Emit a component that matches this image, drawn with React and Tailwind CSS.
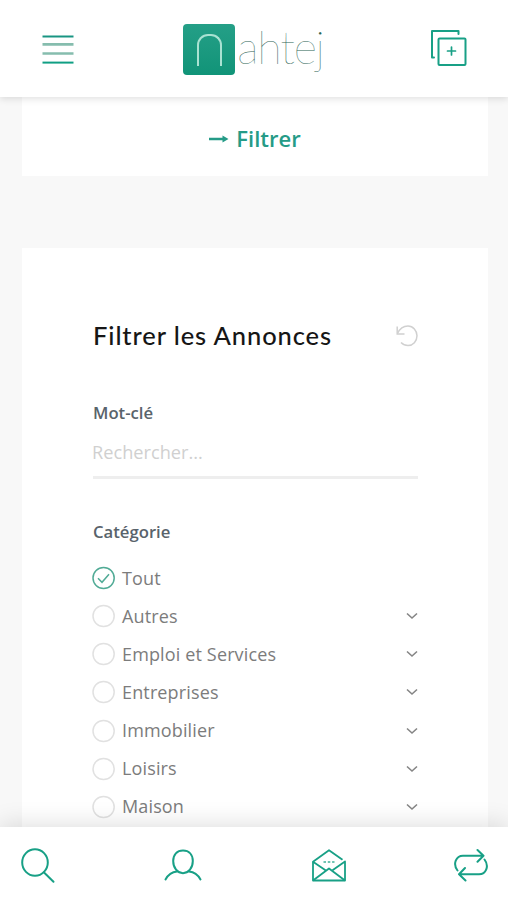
import React from "react";

const categories = [
  "Autres",
  "Emploi et Services",
  "Entreprises",
  "Immobilier",
  "Loisirs",
  "Maison",
];

const Logo = () => (
  <div className="flex items-start h-[54px]">
    <div className="mt-[2px] w-[52px] h-[51px] rounded-[4px] bg-linear-to-b from-[#249f87] to-[#109478] flex items-end justify-center pb-[9px]">
      <div className="w-[25px] h-[32px] border-2 border-b-0 border-[#a9e2d2] rounded-t-[11px]" />
    </div>
    <span className="ml-[2px] mt-[-2px] font-['Lato'] font-thin text-[45px] leading-[54px] tracking-[-1.3px] text-[#2c6455]">
      ahtej
    </span>
  </div>
);

const Header = () => (
  <header className="relative z-10 h-[97px] shrink-0 bg-white shadow-[0_2px_7px_rgba(0,0,0,0.12)] flex items-start justify-between pl-[42px] pr-[41px]">
    <button className="mt-[35px] w-8">
      <svg width="32" height="29" viewBox="0 0 32 29" fill="none" strokeWidth="2">
        <path d="M0.5 1.5h31" stroke="#199582" />
        <path d="M0.5 9.4h31M0.5 18.5h31" stroke="#86bdae" strokeWidth="2.6" />
        <path d="M0.5 27.6h31" stroke="#109f84" />
      </svg>
    </button>
    <div className="mt-[22px] ml-[3px]">
      <Logo />
    </div>
    <button className="mt-[29px]">
      <svg width="37" height="38" viewBox="0 0 37 38" fill="none" stroke="#18a086" strokeWidth="2" strokeLinecap="round" strokeLinejoin="round">
        <path d="M4 28.500H2V2H28.500v3" />
        <rect x="8.500" y="9.500" width="27" height="26.500" rx="1" />
        <path d="M21.500 18v8M17.500 22h8" strokeWidth="1.700" />
      </svg>
    </button>
  </header>
);

const CategoryRow = ({ label, checked }) => (
  <li className="h-[38.15px] flex items-center">
    <svg width="24" height="24" viewBox="0 0 24 24" fill="none" className="-ml-px shrink-0">
      <circle cx="11.6" cy="12" r="10.6" stroke={checked ? "#51ab96" : "#e1e1e1"} strokeWidth="1.5" />
      {checked && <path d="M6 12.3l4 4 7-8" stroke="#51ab96" strokeWidth="1.5" />}
    </svg>
    <span className="ml-[6px] flex-1 text-[18px] tracking-[0.14px] text-[#7c7c7c]">{label}</span>
    {!checked && (
      <svg width="12" height="8" viewBox="0 0 12 8" fill="none" stroke="#858585" strokeWidth="1.6">
        <path d="M1 1.5l5 4.5 5-4.5" />
      </svg>
    )}
  </li>
);

const BottomNav = () => (
  <nav className="relative z-10 h-[73px] shrink-0 bg-white shadow-[0_-3px_24px_rgba(0,0,0,0.13)] flex items-start justify-between pl-[21px] pr-[19px] pt-5">
    {/* Search */}
    <svg width="35" height="37" viewBox="0 0 35 37" fill="none" stroke="#18a086" strokeWidth="2" strokeLinecap="round">
      <ellipse cx="14" cy="15.5" rx="12.8" ry="13.3" />
      <path d="M22.8 25.2l9.7 9.5" />
    </svg>
    {/* Account */}
    <svg width="38" height="37" viewBox="0 0 38 37" className="ml-[2px]" fill="none" stroke="#18a086" strokeWidth="2" strokeLinecap="round">
      <path d="M19 3.500c-6 0-9.800 4-9.800 10.500 0 7 4.300 12.200 9.800 12.200s9.800-5.200 9.800-12.200c0-6.500-3.800-10.500-9.800-10.500z" />
      <path d="M1.500 32.500c2.500-4.500 6-7.300 11.500-7.900M36.500 32.500c-2.500-4.500-6-7.300-11.500-7.900" />
    </svg>
    {/* Messages */}
    <svg width="36" height="37" viewBox="0 0 36 37" className="ml-[4px]" fill="none" stroke="#18a086" strokeWidth="1.8" strokeLinejoin="round">
      <path d="M31.500 12.700L18 3.200 2 14.700V33.500h32V14.500L21.500 23.200" />
      <path d="M2 14.700l12.500 8.500M2 33.500l16-12 16 12" />
      <path d="M12.500 15h11" strokeWidth="2" strokeDasharray="2.500 1.800" stroke="#6fc3b2" />
    </svg>
    {/* Compare */}
    <svg width="36" height="37" viewBox="0 0 36 37" fill="none" stroke="#18a086" strokeWidth="2" strokeLinecap="round" strokeLinejoin="round">
      <path d="M4.500 23.500C-0.500 17 3 8.700 10 8.700h20M24.500 3l6 5.700-6 6" />
      <path d="M31.500 12.500C36.500 19 33 27.300 26 27.300H6M12 21l-6 6.300 6.500 6.200" />
    </svg>
  </nav>
);

const App = () => {
  return (
    <div className="w-[508px] h-[900px] overflow-hidden flex flex-col bg-[#f8f8f8] font-['Open_Sans',sans-serif]">
      <Header />

      <main className="flex-1 min-h-0 overflow-hidden pl-[22px] pr-5">
        {/* Filter toggle */}
        <div className="h-[79px] bg-white flex items-start justify-center pt-[25px] text-[#259b87]">
          <svg width="20" height="10" viewBox="0 0 20 10" className="mt-[12px] mr-[7px]" fill="currentColor">
            <path d="M0 3.700h13.500V1.500L19.500 5l-6 3.500V6.300H0z" />
          </svg>
          <span className="text-[22px] leading-8 font-semibold">Filtrer</span>
        </div>

        {/* Filter form */}
        <section className="mt-[72px] h-[640px] bg-white pl-[71px] pr-[70px] pt-[72px]">
          <div className="flex items-center justify-between h-8">
            <h2 className="-mt-[2px] font-['Lato'] font-medium text-[25.5px] tracking-[0.9px] text-[#161616]">
              Filtrer les Annonces
            </h2>
            <svg width="22" height="22" viewBox="0 0 22 22" fill="none" stroke="#d0d0d0" strokeWidth="1.500">
              <path d="M1.500 8.500C4 3 8 1 12 1c5 0 9 4.500 9 9.800 0 5.400-4 9.700-9 9.700-3 0-5-1-7-3" />
              <path d="M1.200 1.500v7.500h7.300" />
            </svg>
          </div>

          <label className="block mt-[49px] h-6 leading-6 text-[16.7px] font-semibold text-[#59636b]">Mot-clé</label>
          <div className="mt-[7px] h-[47px] border-b-[3px] border-[#eeeeee] pt-[9px]">
            <input
              className="block w-full h-6 -ml-px text-[18.2px] outline-none placeholder:text-[#d0d0d0]"
              placeholder="Rechercher..."
            />
          </div>

          <label className="block mt-[41px] h-6 leading-6 text-[16.7px] font-semibold text-[#59636b]">Catégorie</label>
          <ul className="mt-[15px]">
            <CategoryRow label="Tout" checked />
            {categories.map((label) => (
              <CategoryRow key={label} label={label} />
            ))}
          </ul>
        </section>
      </main>

      <BottomNav />
    </div>
  );
};

export default App;
